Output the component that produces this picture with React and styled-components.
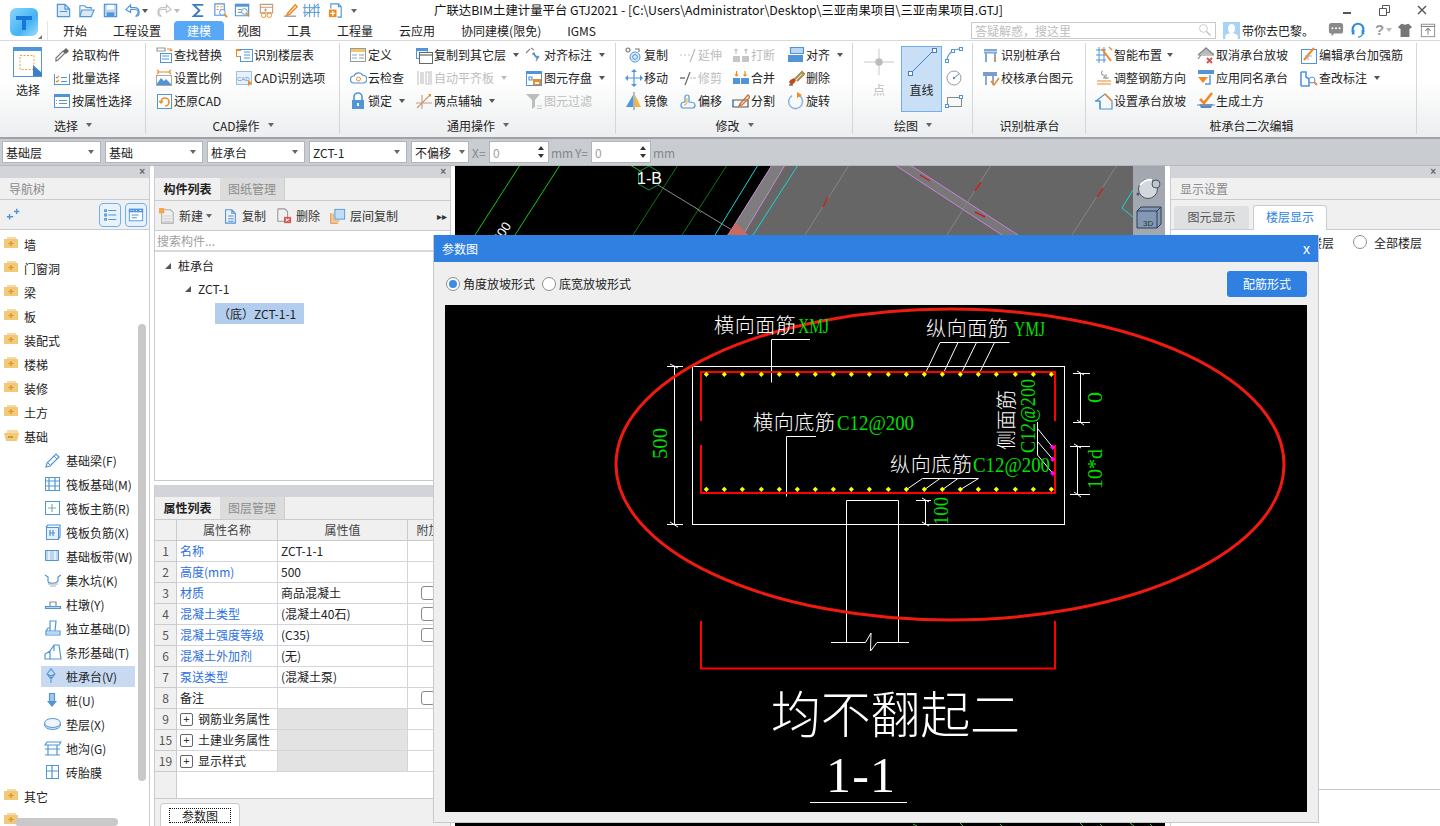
import React from "react";
import styled, { createGlobalStyle } from "styled-components";

const Global = createGlobalStyle`
  html, body { margin: 0; padding: 0; background: #fff; overflow: hidden; }
  * { box-sizing: border-box; }
  body { font-family: "Noto Sans CJK SC", "Liberation Sans", sans-serif; font-size: 12px; color: #222; }
`;

const B = "#4f95d8", O = "#f08a24", G = "#9a9a9a", R = "#d9534f", Y = "#f2c879";

const rect = (x, y, w, h, s = B, f = "#fff", r = 0) => <rect x={x + 0.5} y={y + 0.5} width={w} height={h} stroke={s} fill={f} rx={r} />;
const ln = (d, s = B, w = 1.2) => <path d={d} stroke={s} strokeWidth={w} fill="none" />;
const fl = (d, f = B) => <path d={d} fill={f} />;

const ICONS = {
  newDoc: <>{fl("M2 2h9l5 5v9H2z", "#d9e8f7")}{ln("M2.5 2.5h8l5 5v8h-13zM10.5 2.5v5h5M5 10h8")}</>,
  open: <>{ln("M2 15V4h5l2 2h5v2")}{fl("M4 8h13l-3 7H2z", "#d9e8f7")}{ln("M4 8.5h13l-3 7H2z")}</>,
  save: <>{fl("M2 2h14v14H2z", "#bcd6f0")}{ln("M2.5 2.5h13v13h-13z")}{fl("M5 3h8v5H5z", "#fff")}{fl("M5 11h8v4H5z", B)}</>,
  undo: <>{ln("M2 8l5-5v3h4c4 0 5 3 5 5s-1 4-3 4 2-1 2-4-2-3-4-3H7v3z")}</>,
  redo: <>{ln("M16 8l-5-5v3H7c-4 0-5 3-5 5s1 4 3 4-2-1-2-4 2-3 4-3h4v3z", "#c4c4c4")}</>,
  sigma: <>{ln("M14 3H4l6 6-6 6h10", "#3b7cc0", 2)}</>,
  qa1: <>{ln("M3 2h10v12H3z")}{ln("M5 5h2M5 8h2M9 5h2M9 8h2", O)}<circle cx="11" cy="11" r="3" stroke={B} fill="#fff" />{ln("M13 13l3 3", O, 2)}</>,
  qa2: <>{fl("M1 2h15v3H1z")}{ln("M1.5 2.5h14v12h-14z")}{ln("M4 8h4M4 11h4", G)}<circle cx="11" cy="10" r="3" stroke={B} fill="#fff" />{ln("M13 12l3 3", O, 2)}</>,
  qa3: <>{ln("M2.5 2.5h13v9h-13zM2.5 5.5h13", "#c79a7a")}{ln("M8 7v3M6.5 8.5h3", "#c79a7a")}<circle cx="6" cy="14" r="2.4" stroke={O} fill="none" /><circle cx="12" cy="14" r="2.4" stroke={O} fill="none" /></>,
  qa4: <>{ln("M2 15h13", "#8a8a8a")}{ln("M6 12L14 3l2 2-8 8-3 1z", O, 1.6)}</>,
  qa5: <>{ln("M2 2v14M7 2v14M12 2v14M16 2v14M0 6h18M0 11h18M2 15l14-13", B, 1)}</>,
  qa6: <>{ln("M3 7V2h8l3 3v11h-4M11 2v3h3")}{fl("M1 8h8v8H1z", O)}{ln("M5 9.5v5M2.5 12h5", "#fff", 1.4)}</>,
  pick: <>{ln("M3 15l2-1 7-7-2-2-7 7z", "#777", 1.2)}{fl("M10 5l3-3 3 3-3 3z", "#666")}</>,
  batch: <>{rect(1, 2, 15, 13)}{fl("M1 2h16v3H1z", "#fff")}{ln("M3 8l1 1 2-2M3 12l1 1 2-2", O)}{ln("M8 8.5h6M8 12.5h6")}</>,
  prop: <>{rect(1, 2, 15, 13)}{fl("M1 2h16v3H1z")}{ln("M6 8.5h8M6 11.5h8")}{ln("M3 8.5h1M3 11.5h1", O)}</>,
  find: <>{ln("M2 2h8v3H2z", G)}{ln("M12 3h4v2M16 5l-1-1M16 5l1-1", O)}{rect(5, 7, 11, 9, B, "#fff")}{ln("M7 10h7M7 13h7")}</>,
  scale: <>{ln("M2 1l2 2-2 2M16 1l-2 2 2 2M4 3h10", O)}{fl("M1 16l5-7 3 3 2-2 6 6z", B)}{rect(1, 6, 15, 10, "#aaa", "none")}</>,
  restore: <>{rect(2, 2, 14, 14, B, "#fff")}{ln("M6 10a4 4 0 1 1 4 4", O, 1.6)}{ln("M4 9l2 2 2-2", O, 1.4)}</>,
  floors: <>{fl("M1 3h7v8H1z", O)}{rect(5, 3, 12, 12, B, "#fff")}{fl("M2 5h5v5H2z", "#fff")}{ln("M9 6h6M9 9h6M9 12h6")}</>,
  cadopt: <>{rect(1, 2, 15, 13, "#9cc0e6", "#e8f1fa")}<text x="2" y="12" fontSize="6" fill="#5b8fc9" fontFamily="Liberation Sans">CAD</text>{fl("M13 11l4 3-4 3z", O)}</>,
  define: <>{rect(1, 2, 15, 13, "#9a9a9a", "#fff")}{fl("M2 3h14v3H2z", "#f3c56c")}{fl("M3 8h5v2H3zM3 11h5v2H3z", "#bcd6f0")}{ln("M10 9h5M10 12h5", "#999")}</>,
  cloud: <>{ln("M5 14a3.4 3.4 0 0 1 0-7 5 5 0 0 1 9-.6A3.6 3.6 0 0 1 14 14z")}<circle cx="9.5" cy="10" r="2" stroke={O} fill="none" /></>,
  lock: <>{ln("M5 8V5a4 4 0 0 1 8 0v3", B, 1.6)}{fl("M3 8h12v9H3z")}{fl("M8 11h2v3H8z", "#fff")}</>,
  copyTo: <>{rect(1, 2, 11, 10, B, "#eef5fc")}{fl("M2 2h11v3H2z")}{rect(4, 6, 13, 11, "#666", "#fff")}{ln("M5 9h12", "#666")}</>,
  autoAlign: <>{ln("M3 2v14M16 2v14", "#c8c8c8")}{fl("M5 3h4v12H5z", "#dcdcdc")}{ln("M11 3h3v12h-3z", "#c8c8c8")}</>,
  twoPoint: <>{ln("M1 11h16M7 3v14M2 16L15 3", "#c39a7a", 1.1)}{fl("M13 2l3 0 0 3z", O)}</>,
  alignDim: <>{ln("M1 7l4-4M6 2l3 2M9 9l3 3M12 12l2-2M14 10l-3 5", "#888")}{ln("M8 7l5 5M8 7v2M8 7h2M13 12v-2M13 12h-2", B)}</>,
  store: <>{rect(1, 2, 15, 14)}{fl("M1 2h16v3H1z")}{ln("M4 8h3v3H4z")}{fl("M8 10h8v6H8z", O)}{fl("M10 13h4v2h-4z", "#fff")}</>,
  filter: <>{fl("M1 2h14L10 8v7l-3 2V8z", "#bdbdbd")}{ln("M12 14h5M12 16.5h5", "#c8c8c8")}</>,
  copy: <>{ln("M3 2a2 2 0 1 0 .01 0M10 3h4v3", "#777")}<circle cx="10" cy="11" r="5" stroke={B} fill="#dcebf9" /><circle cx="10" cy="11" r="2.4" stroke={B} fill="none" /></>,
  extend: <>{ln("M1 9h2M5 9h2M9 9h2", "#c4c4c4")}{ln("M11 16L16 3", "#bcbcbc")}</>,
  breakI: <>{fl("M1 10h7v6H1zM10 10h7v6h-7z", "#c6c6c6")}{ln("M4 3v5M2.5 4.5L4 3l1.5 1.5M14 3v5M12.5 4.5L14 3l1.5 1.5", "#c6c6c6")}</>,
  alignI: <>{fl("M3 1h14v7H3z", "#bcd6f0")}{ln("M3.5 1.5h13v6h-13z")}{fl("M1 9h15v7H1z")}</>,
  move: <>{ln("M9 2v14M2 9h14")}{fl("M9 0l3 3H6zM9 18l-3-3h6zM0 9l3-3v6zM18 9l-3 3V6z")}</>,
  trim: <>{ln("M1 9h5", "#555")}{ln("M11 9h2M14 9h3", "#bbb")}{ln("M6 16L11 3", "#666")}</>,
  merge: <>{fl("M1 9h7v6H1zM9 9h8v6H9z")}{ln("M4.5 2v5M3 5.5L4.5 7 6 5.5M13 2v5M11.5 5.5L13 7l1.5-1.5", O)}</>,
  del: <>{ln("M2 16h4", "#444")}{fl("M2 13c2-3 3-3 5-4l2 2c-1 2-2 4-5 5z", "#c44a1a")}{ln("M8 10l7-7 2 2-7 7", "#a78a4c", 2)}</>,
  mirror: <>{fl("M8 3v12H1z")}{fl("M10 3v12h6z", "#f5b63f")}{ln("M9 0v18", "#777", 1)}</>,
  offset: <>{ln("M2 13c0-3 3-3 4-3V5a2 2 0 0 1 4 0v5c2 0 6 0 6 3s-1 3-2 3H4c-1 0-2-1-2-3z", B)}{ln("M5 13c1 0 3-1 3-3V6", "#f1b94a")}</>,
  split: <>{ln("M1 8h15v7H1z", "#555")}{ln("M8 12l8-9 2 2-8 8-3 1z", "#c8743a", 1.4)}{ln("M1 8v2M1 15v-2", B, 2)}</>,
  rotate: <>{ln("M5 3.6A7 7 0 1 0 11 3", "#8db7e2", 1.6)}{fl("M10 0l5 3-5 3z", O)}</>,
  point: <>{ln("M9 1v16M0 9h18", "#c8c8c8", 0.6)}<circle cx="9" cy="9" r="2.2" fill="#bbb" /></>,
  arc: <>{ln("M2 15C2 8 8 3 15 3", "#5d8fc8")}{rect(0, 13, 3, 3)}{rect(14, 1, 3, 3)}{rect(6, 3, 3, 3)}</>,
  circle: <><circle cx="9" cy="9" r="7" stroke="#9a9a9a" fill="none" /><circle cx="9" cy="9" r="1.2" fill={B} />{ln("M9 9l5-4", B, 1)}</>,
  rectI: <>{rect(2, 5, 14, 9, "#888", "none")}{rect(0, 12, 3, 3)}{rect(14, 3, 3, 3)}</>,
  recPile: <>{ln("M2 4h13M2 6.5h13", "#7fa9d8", 2)}{ln("M4 7v9M13 7v9", "#7fa9d8", 2)}{ln("M13 11v4", O, 1.4)}</>,
  chkPile: <>{ln("M1 4h14M1 6h14", "#4f7fb5", 1.3)}{ln("M4 7v9M11 7v9", "#4f7fb5", 1.3)}{ln("M9 12l3 4 5-7", O, 1.6)}</>,
  smart: <>{ln("M1 4h10M1 9h10M1 14h10M4 1v16M9 1v16", B, 1)}{ln("M7 3l9 12", O, 2)}{ln("M14 1l3 3", O, 1.4)}</>,
  adjust: <>{ln("M2 12h14M2 15h14", O, 1.1)}{ln("M8 2c-2 0-2 4 0 4s2 3 0 3M11 5v5M8 9h6", "#999", 1.1)}</>,
  setSlope: <>{ln("M1 9L10 2l7 7v8H5V9z")}{ln("M10 2l7 7", O, 1.4)}{ln("M0 9h5M5 17v-8", B)}</>,
  cancelSlope: <>{fl("M9 1l8 7H2z", "#b9b9b9")}{ln("M1 9l8-7 8 7M1 9h16M4 9l-3 4", "#888")}{ln("M10 12l5 5M15 12l-5 5", R, 1.8)}</>,
  applyName: <>{fl("M1 1h16v4H1z")}{fl("M1 8h10l-5 6z", O)}{ln("M13 6v9H8", B, 1.4)}</>,
  genEarth: <>{ln("M3 7l4 4 8-10", O, 2.6)}{fl("M2 12h14l-2 4H4z", "#5f87b5")}{ln("M0 13h18", "#7f9fc4")}</>,
  editRebar: <>{rect(1, 3, 15, 14, B, "#fff")}{ln("M4 14L14 2", O, 2)}{ln("M5 10h7M8 7v7", "#aaa", 1)}</>,
  checkMark: <>{ln("M1 3v14M1 3h5v5l3 2v7H1", B, 1.6)}<circle cx="12" cy="11" r="3" stroke={B} fill="#fff" />{ln("M14 13l3 3", O, 2)}</>,
  folder: <>{fl("M3 2h9v2H3z", "#f7dba6")}{fl("M0 4h14v9H0z", Y)}{ln("M7 6v5M4.5 8.5h5", "#d99a30", 1.4)}</>,
  folderOpen: <>{fl("M3 3h11v3H3z", "#f7dba6")}{fl("M0 6h15l-2 8H2z", Y)}{ln("M4 10h5", "#c98e2c", 1.6)}</>,
  fBeam: <>{ln("M2 16l1-4 9-9 3 3-9 9z")}{ln("M10 5l3 3M4 12l2 2", B, 1)}</>,
  fRaft: <>{rect(1, 2, 14, 13)}{ln("M1 6h14M1 11h14M5 2v13M11 2v13")}</>,
  fMain: <>{rect(1, 2, 14, 13)}{ln("M8 5v8M4 9h8", "#8ab")}</>,
  fNeg: <>{rect(2, 4, 12, 12, B, "#e6f0fa")}{ln("M2 4l2-2h12v12l-2 2")}{ln("M6 7v6M9 7v6M5 10h6")}</>,
  fBand: <>{fl("M1 3h14v11H1z", "#bcd6f0")}{ln("M5 3v11M11 3v11", "#fff")}{ln("M1.5 3.5h13v10h-13z", B, 1)}</>,
  fPit: <>{ln("M1 4l3 2v4c0 3 8 3 10 0V6l3-2")}{ln("M4 13h10M6 15h6", "#aaa", 1)}</>,
  fCap: <>{fl("M1 11h16v3H1z", "#bcd6f0")}{ln("M6 11V7h6v4", "#8a8a8a")}{ln("M1.5 11.5h15v2h-15z")}</>,
  fIso: <>{ln("M2 16v-4h14v4zM6 12V2h6l-1 10M2 12l2-3h2")}{fl("M3 13h12v2H3z", "#bcd6f0")}</>,
  fStrip: <>{ln("M1 16v-5l5-3 4-6h5l2 14zM6 8v8M10 2v6")}</>,
  fPileCap: <>{ln("M7 16V8M3 7l4-5 4 5-4 2zM3 7l4 5 4-5", B, 1.1)}</>,
  fPile: <>{fl("M5 2h6v8H5z", "#a7c6e6")}{ln("M5.5 2.5h5v8h-5z")}{fl("M3 10h10l-5 6z")}</>,
  fMat: <><ellipse cx="8.5" cy="10" rx="8" ry="4.5" fill="#d4e4f5" stroke={B} /><ellipse cx="8.5" cy="8" rx="8" ry="4.5" fill="#eef5fc" stroke={B} /></>,
  fDitch: <>{ln("M3 3h14l-2 3H1zM4 6v10M13 6v10M1 16h15M1 10h15")}</>,
  fBrick: <>{rect(2, 2, 12, 13)}{ln("M8 2v13M2 8h12")}</>,
  nav1: <>{ln("M1 11h7M4 8v6", B, 1.6)}{ln("M9 5h6M12 2v6", B, 1.6)}</>,
  tNew: <>{ln("M6 2h7l3 3v12H3V6", "#aaa")}{ln("M5 9h9M5 12h9M5 15h9", "#ccc")}{fl("M0 0h6v6H0z", "#f6a64a")}</>,
  tCopy: <>{ln("M4 2h7l4 4v11H4zM11 2v4h4", B)}{ln("M7 9h6M7 12h6M7 15h6")}</>,
  tDel: <>{ln("M2 1h8l3 3v8M2 1v14h7", "#999")}{fl("M9 10h8v7H9z", R)}{ln("M11 12l4 3M15 12l-4 3", "#fff")}</>,
  tFloor: <>{ln("M1 6v11h8", O, 1.4)}{ln("M3.5 6v8.5h7", O, 1)}{rect(5, 1, 11, 11, B, "#c5dcf5")}</>,
  list: <>{ln("M3 3h2v2H3zM3 8h2v2H3zM3 13h2v2H3z")}{ln("M7 4h9M7 9h9M7 14h9")}</>,
  card: <>{rect(1, 2, 15, 13)}{fl("M1 2h16v4H1z")}{ln("M3 4h1M6 4h1M9 4h1M13 4h2", "#fff", 1.2)}{ln("M4 9h8M4 12h6")}</>,
  dlgSearch: <><circle cx="7" cy="7" r="5" stroke="#bbb" fill="none" />{ln("M11 11l5 5", "#bbb", 1.6)}</>,
  chat: <><path d="M1 4a3 3 0 0 1 3-3h10a3 3 0 0 1 3 3v6a3 3 0 0 1-3 3H7l-3 3v-3a3 3 0 0 1-3-3z" fill="#8a8a8a" /><circle cx="5" cy="7" r="1.1" fill="#fff" /><circle cx="9" cy="7" r="1.1" fill="#fff" /><circle cx="13" cy="7" r="1.1" fill="#fff" /></>,
  headset: <>{ln("M3 11V8a6 6 0 0 1 12 0v3", "#2a8fe0", 2.4)}{fl("M2 9h3v5H2zM13 9h3v5h-3z", "#2a8fe0")}{ln("M14 14c-1 2-3 3-5 3", "#2a8fe0", 1.4)}</>,
  shirt: <>{fl("M5 2l4 1 4-1 4 4-3 2v9H4V8L1 6z", "#777")}</>,
  upPane: <>{rect(1, 2, 15, 14, "#888", "none")}{ln("M1 5h16", "#888")}{ln("M9 14V8M6 10l3-3 3 3", "#888")}</>,
};

const Ico = ({ n, s = 18 }) => <svg width={s} height={s} viewBox="0 0 18 18" fill="none" style={{ flex: "none" }}>{ICONS[n]}</svg>;

const Caret = styled.span`
  display: inline-block; width: 0; height: 0; flex: none;
  border-left: 3.5px solid transparent; border-right: 3.5px solid transparent;
  border-top: 4px solid ${p => p.$c || "#666"};
  margin-left: ${p => p.$ml ?? 8}px;
`;

const Page = styled.div`
  width: 1440px; height: 826px; position: relative; overflow: hidden; display: flex; flex-direction: column; background: #fff;
`;
const Head = styled.div`display: flex; height: 41px; background: #fff; border-bottom: 1px solid #d8d9db;`;
const LogoCell = styled.div`width: 47px; position: relative; padding: 8px 0 0 10px;`;
const LogoMark = styled.div`
  width: 28px; height: 28px; border-radius: 6px; background: linear-gradient(135deg, #8cd7fb, #44b3f4 60%, #9edffc);
  display: flex; align-items: center; justify-content: center;
`;
const LogoArrow = styled.span`
  position: absolute; left: 38px; top: 35px; width: 0; height: 0; border-bottom: 4px solid #777; border-left: 4px solid transparent;
`;
const HeadMain = styled.div`flex: 1; display: flex; flex-direction: column;`;
const TitleRow = styled.div`height: 21px; display: flex; align-items: center; position: relative; padding-left: 8px; background: #fff;`;
const Quick = styled.div`display: flex; align-items: center;`;
const QuickSlot = styled.div`width: ${p => p.$w}px; display: flex; align-items: center;`;
const TitleText = styled.div`
  position: absolute; left: 387px; top: 1px; font-size: 12.4px; line-height: 19px; color: #111; white-space: nowrap;
`;
const WinCtl = styled.div`position: absolute; right: 0; top: 0; display: flex; height: 20px; align-items: center; padding-right: 12px; gap: 24px;`;
const TabRow = styled.div`height: 19px; display: flex; align-items: stretch; padding-left: 2px; border-left: 1px solid #e4e4e4;`;
const Tab = styled.div`
  padding: 0 13px; font-size: 12px; line-height: 19px; white-space: nowrap;
  background: ${p => p.$on ? "#58a8f6" : "transparent"}; color: ${p => p.$on ? "#fff" : "#222"};
  border-radius: 4px 4px 0 0;
`;
const HeadRight = styled.div`margin-left: auto; display: flex; align-items: center; height: 18px;`;
const SearchBox = styled.div`
  width: 245px; height: 17px; border: 1px solid #c9c9c9; background: #fff; display: flex; align-items: center;
  padding: 0 3px 0 3px; color: #bdbdbd; font-size: 12px; justify-content: space-between;
`;
const Avatar = styled.div`
  width: 17px; height: 17px; margin-left: 7px; background: #a9d2f7; position: relative; overflow: hidden; flex: none;
  &::before { content: ""; position: absolute; left: 5px; top: 2px; width: 7px; height: 9px; border-radius: 50%; background: #fff; }
  &::after { content: ""; position: absolute; left: 2px; top: 11px; width: 13px; height: 8px; border-radius: 50%; background: #fff; }
`;
const UserName = styled.span`margin-left: 2px; font-size: 12px; width: 86px; white-space: nowrap;`;
const HeadIcons = styled.div`display: flex; align-items: center; width: 112px;`;
const HeadSlot = styled.div`width: ${p => p.$w}px; display: flex; align-items: center; flex: none;`;
const HelpMark = styled.span`font-size: 15px; color: #999; font-family: "Liberation Sans"; font-weight: 700; line-height: 16px; display: inline-flex; align-items: center;`;

const Ribbon = styled.div`
  height: 98px; display: flex; background: linear-gradient(#ffffff 0%, #ffffff 40%, #eceeef 100%);
  border-bottom: 2px solid #9ea2a7; flex: none;
`;
const Group = styled.div`
  width: ${p => p.$w}px; flex: none; display: flex; flex-direction: column; position: relative; padding-top: 2px;
  &::after { content: ""; position: absolute; right: 0; top: 2px; bottom: 3px; width: 1px; background: #d5d6d8; }
`;
const GroupBody = styled.div`height: 69px; display: flex; padding-left: ${p => p.$pl || 0}px;`;
const GroupLabel = styled.div`
  height: 25px; padding-top: 1px; display: flex; align-items: center; justify-content: center; font-size: 12px; color: #222;
`;
const Col = styled.div`width: ${p => p.$w ? p.$w + "px" : "auto"}; flex: none; display: flex; flex-direction: column;`;
const Item = styled.div`
  height: 23px; display: flex; align-items: center; white-space: nowrap; font-size: 12px;
  padding-left: ${p => p.$pl || 0}px;
  color: ${p => p.$off ? "#bdbdbd" : "#222"}; gap: 1px;
`;
const Big = styled.div`
  width: ${p => p.$w}px; margin-left: ${p => p.$ml || 0}px; margin-right: ${p => p.$mr || 0}px; height: 67px; display: flex; flex-direction: column; align-items: center;
  gap: 4px; padding-top: ${p => p.$pt ?? 4}px; font-size: 12px; flex: none;
  color: ${p => p.$off ? "#bdbdbd" : "#222"};
  ${p => p.$on && "background: #c9dff6; border: 1px solid #73aee8; margin-top: 3px; height: 66px;"}
`;

const OptionBar = styled.div`
  height: 27px; background: #c9ccd0; display: flex; align-items: center; padding-left: 2px; border-bottom: 1px solid #b4b7bb; color: #8a8d90;
  flex: none;
`;
const Select = styled.div`
  width: ${p => p.$w}px; height: 22px; background: #fff; border: 1px solid #b1b4b8; margin-right: ${p => p.$mr ?? 4}px; display: flex; align-items: center;
  justify-content: space-between; padding: 0 6px 0 3px; color: #222; font-size: 12px; flex: none; white-space: nowrap;
`;
const NumInput = styled.div`
  width: 60px; height: 22px; background: #fff; border: 1px solid #b1b4b8; color: #a0a0a0; padding-left: 3px; display: flex; align-items: center;
  justify-content: space-between; padding-right: 4px; font-size: 12px; flex: none; margin: 0 2px;
`;
const Spin = styled.span`display: flex; flex-direction: column; gap: 4px;`;
const Up = styled.i`display: block; width: 0; height: 0; border-left: 3px solid transparent; border-right: 3px solid transparent; ${p => p.$d ? "border-top: 4px solid #333;" : "border-bottom: 4px solid #333;"}`;
const Lbl = styled.span`font-size: 12px; color: #85888b; width: ${p => p.$w}px; flex: none; text-align: ${p => p.$a || "left"};`;

const Main = styled.div`flex: 1; display: flex; min-height: 0; position: relative;`;
const NavPane = styled.div`width: 150px; border-right: 1px solid #c8cbd0; display: flex; flex-direction: column; position: relative; flex: none; overflow: hidden;`;
const Strip = styled.div`
  height: 12px; background: #d3d4d9; display: flex; align-items: center; justify-content: flex-end; padding-right: 4px; color: #666; flex: none;
  font-size: 10px; line-height: 12px; font-family: "Liberation Sans"; font-weight: 700;
`;
const PaneHead = styled.div`
  height: 22px; background: #f0f0f0; border-bottom: 1px solid #c8cbd0; color: #8a8a8a; padding-left: 9px; line-height: 21px; flex: none; font-size: 12px;
`;
const NavTools = styled.div`
  height: 30px; background: #f0f0f0; border-bottom: 1px solid #c8cbd0; display: flex; align-items: center; padding: 0 2px 0 6px; flex: none;
`;
const ToolBtn = styled.div`
  width: 22px; height: 24px; border: 1px solid #6fb1ec; border-radius: 4px; background: #e8f2fb; margin-left: ${p => p.$auto ? "auto" : "4px"};
  display: flex; align-items: center; justify-content: center;
`;
const NavTree = styled.div`padding: 2px 0 0 0; flex: none;`;
const NavRow = styled.div`
  height: 24px; display: flex; align-items: center; font-size: 12px; white-space: nowrap; padding-left: 4px; gap: 2px;
`;
const NavChild = styled.div`
  height: 24px; display: flex; align-items: center; margin-left: 41px; width: 94px; padding-left: 3px; gap: 4px; font-size: 12px; white-space: nowrap;
  ${p => p.$on && "background: #c8daf2; height: 21px; margin: 1.5px 0 1.5px 41px;"}
`;
const VBar = styled.div`position: absolute; left: 138px; top: 158px; width: 8px; height: 457px; border-radius: 4px; background: #c9c9c9;`;
const HBar = styled.div`position: absolute; left: 15px; bottom: 0; width: 103px; height: 8px; border-radius: 4px; background: #c9c9c9;`;
const Gap = styled.div`width: 4px; background: #fff; flex: none;`;
const MidPane = styled.div`width: 297px; flex: none; display: flex; flex-direction: column; border-right: 1px solid #c8cbd0; overflow: hidden;`;
const MidTop = styled.div`height: 315px; display: flex; flex-direction: column; flex: none; border-left: 1px solid #c8cbd0;`;
const TabStrip = styled.div`height: ${p => p.$h || 22}px; background: #f0f0f0; display: flex; flex: none;`;
const PaneTab = styled.div`
  width: ${p => p.$w || 65}px; text-align: center; font-size: 12px; line-height: 21px; flex: none;
  color: ${p => p.$on ? "#222" : "#8d8d8d"}; font-weight: ${p => p.$on ? 700 : 400};
  background: ${p => p.$on ? "#f0f0f0" : "#dcdcdc"}; ${p => !p.$on && "border-right: 1px solid #ccc;"}
`;
const Tools = styled.div`
  height: 31px; background: #f0f0f0; display: flex; align-items: center; border-top: 1px solid #c8cbd0; border-bottom: 1px solid #c8cbd0; padding-left: 4px; flex: none; position: relative;
`;
const ToolItem = styled.div`display: flex; align-items: center; gap: 4px; margin-right: ${p => p.$mr}px; font-size: 12px; white-space: nowrap; color: #333;`;
const ToolMore = styled.span`position: absolute; right: 3px; top: 7px; font-size: 10px; color: #333;`;
const SearchRow = styled.div`height: 21px; padding-left: 2px; line-height: 20px; color: #a0a0a0; border-bottom: 2px solid #d8d8d8; flex: none; font-size: 12px;`;
const TreeBox = styled.div`flex: 1; border-bottom: 1px solid #c8cbd0; padding-top: 2px; min-height: 0;`;
const TreeRow = styled.div`
  height: 23px; display: flex; align-items: center; padding-left: ${p => p.$pl}px; gap: 6px; font-size: 12px;
`;
const TreeTri = styled.i`width: 0; height: 0; border-bottom: 6px solid #555; border-left: 6px solid transparent; margin-right: 1px;`;
const TreeSel = styled.div`margin-left: 60px; width: 89px; height: 21px; background: #b3cdee; display: flex; align-items: center; padding-left: 3px; font-size: 12px; white-space: nowrap; margin-top: 3px;`;
const Divider = styled.div`height: 4px; background: #fff; flex: none;`;
const MidBottom = styled.div`flex: 1; display: flex; flex-direction: column; border-left: 1px solid #c8cbd0; min-height: 0;`;
const PropTabs = styled(TabStrip)`border-bottom: 1px solid #c8cbd0;`;
const PropTable = styled.div`display: grid; grid-template-columns: 22px 101px 130px 1fr; grid-auto-rows: 21px; flex: none; font-size: 12px;`;
const HCell = styled.div`
  background: #f0f0f0; border-right: 1px solid #c8cbd0; border-bottom: 1px solid #c8cbd0; text-align: center; line-height: 20px; color: #444; white-space: nowrap;
`;
const Num = styled(HCell)`color: #555; font-size: 12px;`;
const Cell = styled.div`
  background: ${p => p.$fill ? "#e3e3e3" : "#fff"}; border-right: 1px solid #d3d5d8; border-bottom: 1px solid #d3d5d8; padding-left: 3px;
  line-height: 20px; white-space: nowrap; color: ${p => p.$blue ? "#2c6fe0" : "#222"}; display: flex; align-items: center; overflow: hidden;
`;
const Plus = styled.span`
  width: 13px; height: 13px; border: 1px solid #666; border-radius: 2px; display: inline-flex; align-items: center; justify-content: center;
  margin: 0 5px 0 0; font-size: 11px; line-height: 11px; font-family: "Liberation Sans"; color: #333; flex: none;
`;
const Check = styled.span`width: 14px; height: 14px; border: 1px solid #888; border-radius: 3px; background: #fff; margin-left: 10px; flex: none;`;
const Blank = styled.div`height: 27px; border-bottom: 1px solid #c8cbd0; display: flex; flex: none;`;
const BlankNum = styled.div`width: 22px; background: #f0f0f0; border-right: 1px solid #c8cbd0;`;
const BottomBar = styled.div`flex: 1; background: #f0f0f0; padding: 4px 0 0 5px;`;
const BottomTab = styled.div`
  width: 80px; height: 23px; background: #fff; border: 1px solid #c8cbd0; border-bottom: none; border-radius: 4px 4px 0 0; padding: 4px 8px 0;
`;
const Focus = styled.div`height: 15px; border: 1px dotted #111; line-height: 13px; text-align: center; font-size: 12px;`;
const Canvas = styled.div`width: 710px; flex: none; background: #000; position: relative; overflow: hidden; margin-left: 4px;`;
const CanvasSvg = styled.svg`display: block; width: 100%; height: 100%;`;
const ViewStrip = styled.div`
  position: absolute; right: 0; top: 0; width: 32px; height: 80px; background: #a3a7af; display: flex; flex-direction: column; align-items: center; padding-top: 12px; gap: 7px;
`;
const RightPane = styled.div`flex: 1; display: flex; flex-direction: column; margin-left: 5px; border-left: 1px solid #c8cbd0; min-width: 0;`;
const RightTabs = styled.div`height: 30px; background: #f0f0f0; border-bottom: 1px solid #c8cbd0; display: flex; align-items: flex-end; padding-left: 3px; gap: 4px; flex: none;`;
const RTab = styled.div`
  width: ${p => p.$on ? 74 : 75}px; height: ${p => p.$on ? 25 : 23}px; text-align: center; line-height: 22px; font-size: 12px; border-radius: 3px 3px 0 0;
  color: ${p => p.$on ? "#2a84e6" : "#555"}; background: ${p => p.$on ? "#fff" : "#dfe0e2"};
  ${p => p.$on && "border: 1px solid #c8cbd0; border-bottom: none; margin-bottom: -1px;"}
`;
const RBody = styled.div`
  height: 560px; border-bottom: 1px solid #c5cad2; display: flex; align-items: flex-start; padding: 2px 0 0 94px; font-size: 12px; flex: none;
`;
const Radio = styled.span`
  width: 14px; height: 14px; border-radius: 50%; border: 1px solid #8d8d8d; background: #fff; flex: none; display: inline-flex; align-items: center; justify-content: center;
  ${p => p.$on && `&::after { content: ""; width: 8px; height: 8px; border-radius: 50%; background: #3b8be6; }`}
`;
const RadioWrap = styled.div`display: flex; align-items: center; gap: 3px; margin-right: 7px; font-size: 12px; color: #222; white-space: nowrap;`;
const RRadioRow = styled.div`display: flex; align-items: center; gap: 7px; height: 16px; margin-top: 2px; margin-right: 19px; white-space: nowrap; flex: none;`;

const Dialog = styled.div`
  position: absolute; left: 433px; top: 69px; width: 886px; height: 588px; background: #efefef; border: 1px solid #c5cad2; border-top: none;
  display: flex; flex-direction: column; z-index: 5;
`;
const DialogTitle = styled.div`
  height: 27px; background: #2f80e0; color: #fff; display: flex; align-items: center; justify-content: space-between; padding: 0 8px; font-size: 12px; flex: none;
`;
const DialogClose = styled.span`font-family: "Liberation Sans"; font-size: 14px; line-height: 14px;`;
const DialogBar = styled.div`height: 43px; display: flex; align-items: center; padding: 0 11px 0 12px; flex: none;`;
const PrimaryBtn = styled.div`
  margin-left: auto; width: 80px; height: 26px; background: #2f80e0; border-radius: 3px; color: #fff; text-align: center; line-height: 26px; font-size: 12px;
`;
const DrawingWrap = styled.div`margin: 0 11px; height: 507px; background: #000; flex: none;`;
const Drawing = styled.svg`display: block; width: 862px; height: 507px;`;

const Row = ({ i, t, off, drop }) => (
  <Item $off={off}><Ico n={i} /><span>{t}</span>{drop && <Caret $ml={drop === true ? 6 : drop} $c={off ? "#bbb" : "#555"} />}</Item>
);
const Label = ({ t }) => <GroupLabel>{t}<Caret $ml={8} /></GroupLabel>;

const navTop = ["墙", "门窗洞", "梁", "板", "装配式", "楼梯", "装修", "土方"];
const navKids = [["fBeam", "基础梁(F)"], ["fRaft", "筏板基础(M)"], ["fMain", "筏板主筋(R)"], ["fNeg", "筏板负筋(X)"], ["fBand", "基础板带(W)"], ["fPit", "集水坑(K)"], ["fCap", "柱墩(Y)"], ["fIso", "独立基础(D)"], ["fStrip", "条形基础(T)"], ["fPileCap", "桩承台(V)", true], ["fPile", "桩(U)"], ["fMat", "垫层(X)"], ["fDitch", "地沟(G)"], ["fBrick", "砖胎膜"]];
const props = [
  ["1", "名称", "ZCT-1-1", 1, 0], ["2", "高度(mm)", "500", 1, 0], ["3", "材质", "商品混凝土", 1, 1], ["4", "混凝土类型", "(混凝土40石)", 1, 1],
  ["5", "混凝土强度等级", "(C35)", 1, 1], ["6", "混凝土外加剂", "(无)", 1, 0], ["7", "泵送类型", "(混凝土泵)", 1, 0], ["8", "备注", "", 0, 1],
];
const groups = [["9", "钢筋业务属性"], ["15", "土建业务属性"], ["19", "显示样式"]];
const quick = [["newDoc", 23], ["open", 24], ["save", 22], ["undo", 32, 1], ["redo", 34, 2], ["sigma", 22], ["qa1", 22], ["qa2", 24], ["qa3", 24], ["qa4", 21], ["qa5", 25], ["qa6", 23]];

const dotsX = [289, 343, 397, 454, 508, 562, 616, 670, 724, 778, 835, 889, 943, 997, 1051, 1105, 1159, 1216, 1270, 1324].map(v => 610 + v / 3);
const Diamond = ({ x, y, c }) => <path d={`M${x} ${y - 2.6}L${x + 2.6} ${y}L${x} ${y + 2.6}L${x - 2.6} ${y}Z`} fill={c} />;

const CN = "'Noto Sans CJK SC','Noto Sans CJK TC',sans-serif";
const SERIF = "'Liberation Serif',serif";

const WTxt = ({ x, y, w, s = 20, children, ...r }) => (
  <text x={x} y={y} fontSize={s} fill="#fff" fontFamily={CN} fontWeight="300" textLength={w} lengthAdjust="spacing" {...r}>{children}</text>
);
const GTxt = ({ x, y, w, s = 21, children, ...r }) => (
  <text x={x} y={y} fontSize={s} fill="#00e000" fontFamily={SERIF} textLength={w} lengthAdjust="spacingAndGlyphs" {...r}>{children}</text>
);

export default function App() {
  return (
    <Page>
      <Global />
      <Head>
        <LogoCell>
          <LogoMark>
            <svg width="20" height="20" viewBox="0 0 20 20"><path d="M2 4h16v4h-6v10H8V8H2z" fill="#1677d6" /></svg>
          </LogoMark>
          <LogoArrow />
        </LogoCell>
        <HeadMain>
          <TitleRow>
            <Quick>
              {quick.map(([n, w, c], i) => (
                <QuickSlot key={i} $w={w}><Ico n={n} s={17} />{c && <Caret $ml={1} $c={c === 2 ? "#bbb" : "#555"} />}</QuickSlot>
              ))}
              <Caret $ml={0} $c="#666" />
            </Quick>
            <TitleText>广联达BIM土建计量平台 GTJ2021 - [C:\Users\Administrator\Desktop\三亚南果项目\三亚南果项目.GTJ]</TitleText>
            <WinCtl>
              <svg width="12" height="12" viewBox="0 0 12 12"><path d="M1 9h8" stroke="#555" strokeWidth="2" /></svg>
              <svg width="14" height="12" viewBox="0 0 14 12" fill="none" stroke="#555"><path d="M1.5 4.5h7v7h-7zM4.5 4V1.5h7v7H9" /></svg>
              <svg width="12" height="12" viewBox="0 0 12 12" fill="none" stroke="#555" strokeWidth="1.4"><path d="M2 2l8 8M10 2l-8 8" /></svg>
            </WinCtl>
          </TitleRow>
          <TabRow>
            {["开始", "工程设置", "建模", "视图", "工具", "工程量", "云应用", "协同建模(限免)", "IGMS"].map(t => <Tab key={t} $on={t === "建模"}>{t}</Tab>)}
            <HeadRight>
              <SearchBox>答疑解惑，搜这里<Ico n="dlgSearch" s={14} /></SearchBox>
              <Avatar />
              <UserName>带你去巴黎。</UserName>
              <HeadIcons>
                <HeadSlot $w={22}><Ico n="chat" s={16} /></HeadSlot>
                <HeadSlot $w={25}><Ico n="headset" s={16} /></HeadSlot>
                <HeadSlot $w={22}><HelpMark>?</HelpMark><Caret $ml={2} $c="#bbb" /></HeadSlot>
                <HeadSlot $w={23}><Ico n="shirt" s={16} /></HeadSlot>
                <HeadSlot $w={16}><Ico n="upPane" s={16} /></HeadSlot>
              </HeadIcons>
            </HeadRight>
          </TabRow>
        </HeadMain>
      </Head>

      <Ribbon>
        <Group $w={146}>
          <GroupBody $pl={13}>
            <Big $w={30} $mr={10}>
              <svg width="30" height="30" viewBox="0 0 30 30" fill="none"><rect x="0.5" y="0.5" width="28" height="29" fill="#fff" stroke="#4f95d8" /><rect x="0" y="0" width="29" height="4" fill="#4f95d8" /><path d="M7 8.5h14v14H7z" stroke="#f0a030" strokeDasharray="2 1.5" /><path d="M20 18l9 8v3H20z" fill="#3f7fc4" /></svg>
              选择
            </Big>
            <Col>
              <Row i="pick" t="拾取构件" />
              <Row i="batch" t="批量选择" />
              <Row i="prop" t="按属性选择" />
            </Col>
          </GroupBody>
          <Label t="选择" />
        </Group>
        <Group $w={194}>
          <GroupBody $pl={9}>
            <Col $w={80}>
              <Row i="find" t="查找替换" />
              <Row i="scale" t="设置比例" />
              <Row i="restore" t="还原CAD" />
            </Col>
            <Col>
              <Row i="floors" t="识别楼层表" />
              <Row i="cadopt" t="CAD识别选项" />
            </Col>
          </GroupBody>
          <Label t="CAD操作" />
        </Group>
        <Group $w={276}>
          <GroupBody $pl={9}>
            <Col $w={66}>
              <Row i="define" t="定义" />
              <Row i="cloud" t="云检查" />
              <Row i="lock" t="锁定" drop />
            </Col>
            <Col $w={110}>
              <Row i="copyTo" t="复制到其它层" drop />
              <Row i="autoAlign" t="自动平齐板" off drop />
              <Row i="twoPoint" t="两点辅轴" drop />
            </Col>
            <Col>
              <Row i="alignDim" t="对齐标注" drop />
              <Row i="store" t="图元存盘" drop />
              <Row i="filter" t="图元过滤" off />
            </Col>
          </GroupBody>
          <Label t="通用操作" />
        </Group>
        <Group $w={237}>
          <GroupBody $pl={9}>
            <Col $w={54}>
              <Row i="copy" t="复制" />
              <Row i="move" t="移动" />
              <Row i="mirror" t="镜像" />
            </Col>
            <Col $w={53}>
              <Row i="extend" t="延伸" off />
              <Row i="trim" t="修剪" off />
              <Row i="offset" t="偏移" />
            </Col>
            <Col $w={55}>
              <Row i="breakI" t="打断" off />
              <Row i="merge" t="合并" />
              <Row i="split" t="分割" />
            </Col>
            <Col>
              <Row i="alignI" t="对齐" drop />
              <Row i="del" t="删除" />
              <Row i="rotate" t="旋转" />
            </Col>
          </GroupBody>
          <Label t="修改" />
        </Group>
        <Group $w={120}>
          <GroupBody>
            <Big $w={30} $ml={11} $off>
              <Ico n="point" s={30} />
              点
            </Big>
            <Big $w={41} $ml={7} $pt={0} $on>
              <svg width="30" height="30" viewBox="0 0 30 30" fill="none" stroke="#3f7fc4"><path d="M5 25L25 5" strokeWidth="1" /><rect x="1.5" y="24.5" width="4" height="4" fill="#fff" /><rect x="25.5" y="1.5" width="4" height="4" fill="#fff" /></svg>
              直线
            </Big>
            <Col $w={26}>
              <Item $pl={3}><Ico n="arc" s={18} /></Item>
              <Item $pl={3}><Ico n="circle" s={18} /></Item>
              <Item $pl={3}><Ico n="rectI" s={18} /></Item>
            </Col>
          </GroupBody>
          <Label t="绘图" />
        </Group>
        <Group $w={113}>
          <GroupBody $pl={9}>
            <Col>
              <Row i="recPile" t="识别桩承台" />
              <Row i="chkPile" t="校核承台图元" />
            </Col>
          </GroupBody>
          <GroupLabel>识别桩承台</GroupLabel>
        </Group>
        <Group $w={331}>
          <GroupBody $pl={9}>
            <Col $w={102}>
              <Row i="smart" t="智能布置" drop={4} />
              <Row i="adjust" t="调整钢筋方向" />
              <Row i="setSlope" t="设置承台放坡" />
            </Col>
            <Col $w={103}>
              <Row i="cancelSlope" t="取消承台放坡" />
              <Row i="applyName" t="应用同名承台" />
              <Row i="genEarth" t="生成土方" />
            </Col>
            <Col>
              <Row i="editRebar" t="编辑承台加强筋" />
              <Row i="checkMark" t="查改标注" drop />
            </Col>
          </GroupBody>
          <GroupLabel>桩承台二次编辑</GroupLabel>
        </Group>
      </Ribbon>

      <OptionBar>
        <Select $w={99}>基础层<Caret /></Select>
        <Select $w={98}>基础<Caret /></Select>
        <Select $w={98}>桩承台<Caret /></Select>
        <Select $w={98}>ZCT-1<Caret /></Select>
        <Select $w={58} $mr={3}>不偏移<Caret /></Select>
        <Lbl $w={15}>X=</Lbl>
        <NumInput>0<Spin><Up /><Up $d /></Spin></NumInput>
        <Lbl $w={23}>mm</Lbl>
        <Lbl $w={15} $a="center">Y=</Lbl>
        <NumInput>0<Spin><Up /><Up $d /></Spin></NumInput>
        <Lbl $w={23}>mm</Lbl>
      </OptionBar>

      <Main>
        <NavPane>
          <Strip>×</Strip>
          <PaneHead>导航树</PaneHead>
          <NavTools>
            <Ico n="nav1" s={16} />
            <ToolBtn $auto><Ico n="list" s={16} /></ToolBtn>
            <ToolBtn><Ico n="card" s={16} /></ToolBtn>
          </NavTools>
          <NavTree>
            {navTop.map(t => <NavRow key={t}><Ico n="folder" />{t}</NavRow>)}
            <NavRow><Ico n="folderOpen" />基础</NavRow>
            {navKids.map(([i, t, on]) => <NavChild key={t} $on={on}><Ico n={i} />{t}</NavChild>)}
            <NavRow><Ico n="folder" />其它</NavRow>
            <NavRow><Ico n="folder" /></NavRow>
          </NavTree>
          <VBar />
          <HBar />
        </NavPane>
        <Gap />
        <MidPane>
          <MidTop>
            <Strip>×</Strip>
            <TabStrip><PaneTab $on>构件列表</PaneTab><PaneTab>图纸管理</PaneTab></TabStrip>
            <Tools>
              <ToolItem $mr={10}><Ico n="tNew" s={16} />新建<Caret $ml={-1} /></ToolItem>
              <ToolItem $mr={10}><Ico n="tCopy" s={16} />复制</ToolItem>
              <ToolItem $mr={10}><Ico n="tDel" s={16} />删除</ToolItem>
              <ToolItem $mr={0}><Ico n="tFloor" s={16} />层间复制</ToolItem>
              <ToolMore>▸▸</ToolMore>
            </Tools>
            <SearchRow>搜索构件...</SearchRow>
            <TreeBox>
              <TreeRow $pl={10}><TreeTri />桩承台</TreeRow>
              <TreeRow $pl={30}><TreeTri />ZCT-1</TreeRow>
              <TreeSel>（底）ZCT-1-1</TreeSel>
            </TreeBox>
          </MidTop>
          <Divider />
          <MidBottom>
            <Strip />
            <PropTabs $h={23}><PaneTab $on>属性列表</PaneTab><PaneTab>图层管理</PaneTab></PropTabs>
            <PropTable>
              <HCell />
              <HCell>属性名称</HCell>
              <HCell>属性值</HCell>
              <HCell>附加</HCell>
              {props.map(([n, k, v, blue, chk]) => (
                <React.Fragment key={n}>
                  <Num>{n}</Num>
                  <Cell $blue={!!blue}>{k}</Cell>
                  <Cell>{v}</Cell>
                  <Cell>{chk ? <Check /> : null}</Cell>
                </React.Fragment>
              ))}
              {groups.map(([n, k]) => (
                <React.Fragment key={n}>
                  <Num>{n}</Num>
                  <Cell><Plus>+</Plus>{k}</Cell>
                  <Cell $fill />
                  <Cell />
                </React.Fragment>
              ))}
            </PropTable>
            <Blank><BlankNum /></Blank>
            <BottomBar><BottomTab><Focus>参数图</Focus></BottomTab></BottomBar>
          </MidBottom>
        </MidPane>
        <Canvas>
          <CanvasSvg viewBox="455 166 710 660" fill="none">
            <path d="M772 165H1165V240H725z" fill="#666" />
            <path d="M520 165L475 235M560 165L515 235" stroke="#14c814" />
            <path d="M678 165L633 235M727 165L682 235M695 207l6 6" stroke="#0a7a0a" />
            <path d="M630 165L642 172" stroke="#14c814" />
            <path d="M758 165L715 235M798 165L753 235" stroke="#19d6d6" />
            <path d="M772 165L728 235L743 235L785 165z" fill="#7d7d7d" />
            <path d="M772 165L728 235M785 165L743 235" stroke="#c98ad0" />
            <path d="M895 165L1002 235L1018 235L910 165z" fill="#787878" />
            <path d="M895 165L1002 235M910 165L1018 235" stroke="#cf7fe0" />
            <path d="M849 165L805 235M991 165L947 235M1117 165L1072 235" stroke="#858585" />
            <path d="M828 197L823 207M981 182L975 191M1103 188L1097 197M920 175L930 181M975 212L985 217" stroke="#c81e1e" strokeWidth="1.4" />
            <path d="M658 185L732 230" stroke="#8a8a8a" />
            <path d="M649 166l10.5 6v12L649 190l-10.5-6v-12z" stroke="#0f8f3f" />
            <text x="637" y="184" fontSize="16" fill="#fff" fontFamily="Liberation Sans">1-B</text>
            <text transform="translate(500 244) rotate(-58)" fontSize="13" fill="#fff" fontFamily="Liberation Sans">500</text>
            <path d="M727 235l9-12 12 12z" fill="#c96a60" />
            <path d="M1133 190L1122 208L1133 217" stroke="#19d6d6" />
            <path d="M913 824l4 2M960 823l3 3M1000 824l2 2M1080 823l3 3M1100 824l2 2M1130 823l4 3M1150 824l2 2" stroke="#3ac43a" />
          </CanvasSvg>
          <ViewStrip>
            <svg width="26" height="21" viewBox="0 0 26 21"><circle cx="12" cy="11" r="9.5" fill="#d3d8de" stroke="#4d5560" /><path d="M4 7c3-4 8-6 12-5" stroke="#fff" strokeWidth="2" fill="none" /><circle cx="20" cy="6" r="4" fill="#bfc6cf" stroke="#4d5560" /><circle cx="2" cy="16" r="1.5" fill="#4d5560" /></svg>
            <svg width="26" height="23" viewBox="0 0 26 23" fill="none" stroke="#2c3e55"><path d="M1 5l4-4h20v17l-4 4H1z" fill="#8498b5" /><path d="M1 5h20v17M21 5l4-4" /><text x="7" y="20" fontSize="8" fill="#142" stroke="none" fontFamily="Liberation Sans">3D</text></svg>
          </ViewStrip>
        </Canvas>
        <RightPane>
          <Strip>×</Strip>
          <PaneHead>显示设置</PaneHead>
          <RightTabs><RTab>图元显示</RTab><RTab $on>楼层显示</RTab></RightTabs>
          <RBody>
            <RRadioRow><Radio />当前楼层</RRadioRow>
            <RRadioRow><Radio />全部楼层</RRadioRow>
          </RBody>
        </RightPane>

        <Dialog>
          <DialogTitle>参数图<DialogClose>x</DialogClose></DialogTitle>
          <DialogBar>
            <RadioWrap><Radio $on />角度放坡形式</RadioWrap>
            <RadioWrap><Radio />底宽放坡形式</RadioWrap>
            <PrimaryBtn>配筋形式</PrimaryBtn>
          </DialogBar>
          <DrawingWrap>
            <Drawing viewBox="445 305 862 507" fill="none">
              <g stroke="#fff" strokeWidth="1">
                <rect x="692.5" y="366.5" width="372" height="158" />
                <path d="M846.5 500.5H898.5V642.5M846.5 500.5V642.5M831 642.5H865.5L871 633L870.5 651L877 642.5H909" />
                <path d="M810 339.5H771.5V382.5" />
                <path d="M1009.5 342.5H940M940 342.5L925 374M958 342.5L943 374M976.5 342.5L961 374M994.5 342.5L979 374" />
                <path d="M816 436.5H786.5V496.5" />
                <path d="M978.5 478.5H922.5M922.5 478.5L906.5 489.5M940 478.5L924.5 489.5M958 478.5L942.5 489.5M978.5 478.5L960.5 489.5" />
                <path d="M1037.5 422V455M1037.5 428.5L1052.5 447M1037.5 441.5L1052.5 459M1037.5 455L1052.5 473" />
                <path d="M674.5 366V524M667 366.5H683M667 524.5H683M670 364l8 4M670 522l8 5" />
                <path d="M1080.5 373V422M1073 373.5H1090M1073 422.5H1090M1077 371l7 4M1077 420l7 5" />
                <path d="M1077.5 446V494M1070 446.5H1090M1070 494.5H1090M1074 444l7 4M1074 492l7 5" />
                <path d="M925.5 500V524M916 500.5H931M916 524.5H931M922 498l7 4M922 522l7 4" />
                <path d="M810 802.5H907" />
              </g>
              <g stroke="#ff0000" strokeWidth="2">
                <path d="M701 421V372H1055V421M701 445V493H1055V445M701 621V668.5H1055V621" />
              </g>
              {dotsX.map((x, i) => <React.Fragment key={i}><Diamond x={x} y={374.3} c="#ffff00" /><Diamond x={x} y={489.3} c="#ffff00" /></React.Fragment>)}
              {[447.3, 459.3, 473.3].map(y => <Diamond key={y} x={1052.7} y={y} c="#ff00ff" />)}
              <ellipse cx="950" cy="464.5" rx="334" ry="155.5" stroke="#f01a10" strokeWidth="3" />
              <WTxt x={714} y={333} w={82}>横向面筋</WTxt>
              <GTxt x={798} y={333} w={31}>XMJ</GTxt>
              <WTxt x={926} y={336} w={82}>纵向面筋</WTxt>
              <GTxt x={1014} y={336} w={31}>YMJ</GTxt>
              <WTxt x={753} y={430} w={82}>横向底筋</WTxt>
              <GTxt x={837} y={430} w={77}>C12@200</GTxt>
              <WTxt x={890} y={472} w={82}>纵向底筋</WTxt>
              <GTxt x={973} y={472} w={77}>C12@200</GTxt>
              <WTxt x={0} y={0} w={60} transform="translate(1014 450) rotate(-90)">侧面筋</WTxt>
              <GTxt x={0} y={0} w={74} transform="translate(1035 453) rotate(-90)">C12@200</GTxt>
              <GTxt x={0} y={0} w={31} transform="translate(667 459) rotate(-90)">500</GTxt>
              <GTxt x={0} y={0} w={11} transform="translate(1102 403) rotate(-90)">0</GTxt>
              <GTxt x={0} y={0} w={40} transform="translate(1102 489) rotate(-90)">10*d</GTxt>
              <GTxt x={0} y={0} w={28} transform="translate(948 525) rotate(-90)">100</GTxt>
              <WTxt x={771} y={733} w={249} s={50}>均不翻起二</WTxt>
              <text x="826" y="792" fontSize="50" fill="#fff" fontFamily="'Liberation Serif',serif" textLength="69">1-1</text>
            </Drawing>
          </DrawingWrap>
        </Dialog>
      </Main>
    </Page>
  );
}
